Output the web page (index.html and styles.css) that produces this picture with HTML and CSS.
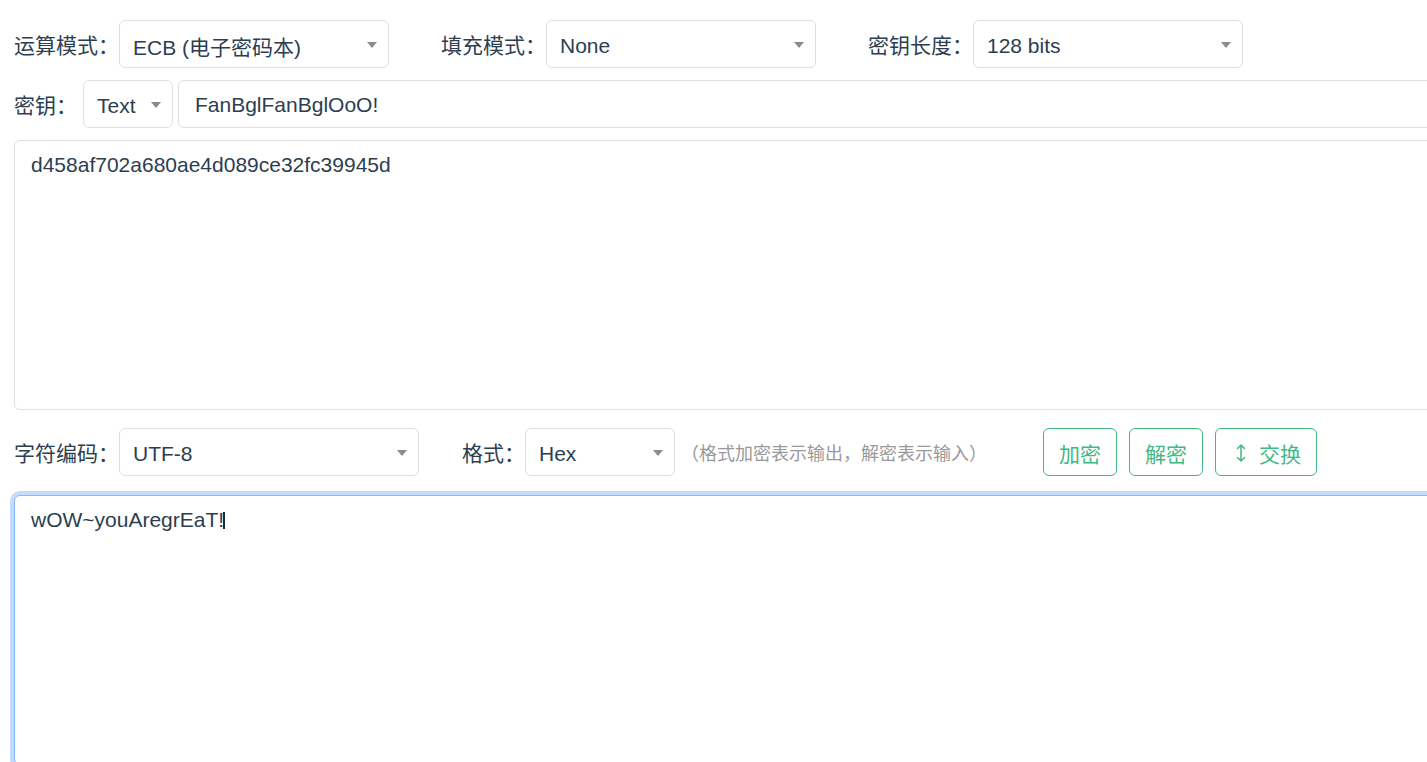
FILE: index.html
```html
<!DOCTYPE html>
<html lang="zh-CN">
<head>
  <meta charset="UTF-8">
  <meta name="viewport" content="width=device-width, initial-scale=1.0">
  <title>AES 加解密</title>
  <link rel="stylesheet" href="styles.css">
</head>
<body>

<div class="page">

  <div class="row">
    <span class="label">运算模式：</span>
    <div class="select w270 gap-after"><span>ECB (电子密码本)</span><i class="caret"></i></div>
    <span class="label">填充模式：</span>
    <div class="select w270 gap-after"><span>None</span><i class="caret"></i></div>
    <span class="label">密钥长度：</span>
    <div class="select w270"><span>128 bits</span><i class="caret"></i></div>
  </div>

  <div class="row">
    <span class="label key-label">密钥：</span>
    <div class="select w90"><span>Text</span><i class="caret"></i></div>
    <div class="input key-input">FanBglFanBglOoO!</div>
  </div>

  <div class="textbox">d458af702a680ae4d089ce32fc39945d</div>

  <div class="row row-tools">
    <span class="label">字符编码：</span>
    <div class="select w300 gap-small"><span>UTF-8</span><i class="caret"></i></div>
    <span class="label">格式：</span>
    <div class="select w150"><span>Hex</span><i class="caret"></i></div>
    <span class="hint">（格式加密表示输出，解密表示输入）</span>
    <div class="buttons">
      <button class="btn">加密</button>
      <button class="btn">解密</button>
      <button class="btn">
        <svg class="swap-icon" width="20" height="22" viewBox="0 0 20 22" fill="none" stroke="currentColor" stroke-width="1.5" stroke-linecap="round" stroke-linejoin="round">
          <path d="M10 3v16M6.5 6.5L10 3l3.5 3.5M6.5 15.5L10 19l3.5-3.5"/>
        </svg>交换
      </button>
    </div>
  </div>

  <div class="textbox focused">wOW~youAregrEaT!<span class="cursor"></span></div>

</div>

</body>
</html>
```

FILE: styles.css
```css
html, body {
  margin: 0;
  padding: 0;
  overflow: hidden;
  background: #fff;
}

.page {
  width: 1600px;
  padding: 20px 0 0 14px;
  font-family: "Liberation Sans", Arial, "Noto Sans CJK SC", sans-serif;
  font-size: 21px;
  color: #2c3e50;
}

.row {
  display: flex;
  align-items: center;
  height: 48px;
  margin-bottom: 12px;
}

.row-tools {
  margin-top: 18px;
  margin-bottom: 19px;
}

.label {
  white-space: nowrap;
  color: #2c3e50;
}

.key-label {
  margin-right: 6px;
}

.select {
  position: relative;
  display: flex;
  align-items: center;
  box-sizing: border-box;
  height: 48px;
  padding: 3px 30px 0 13px;
  border: 1px solid #dcdfe6;
  border-radius: 6px;
  background: #fff;
  white-space: nowrap;
}

.w270 { width: 270px; }
.w300 { width: 300px; }
.w150 { width: 150px; }
.w90 { width: 90px; }

.gap-after { margin-right: 52px; }
.gap-small { margin-right: 43px; }

.caret {
  position: absolute;
  right: 11px;
  top: 21px;
  width: 0;
  height: 0;
  border-left: 5px solid transparent;
  border-right: 5px solid transparent;
  border-top: 6px solid #8a8a8a;
}

.input {
  display: flex;
  align-items: center;
  box-sizing: border-box;
  height: 48px;
  padding: 2px 16px 0;
  border: 1px solid #dcdfe6;
  border-radius: 6px;
}

.key-input {
  flex: 1;
  margin-left: 5px;
}

.textbox {
  box-sizing: border-box;
  height: 270px;
  padding: 8px 16px;
  line-height: 1.5;
  border: 1px solid #dcdfe6;
  border-radius: 6px;
  background: #fff;
  white-space: pre-wrap;
}

.textbox.focused {
  border-color: #80bdff;
  box-shadow: 0 0 0 4px #c3dcfd;
}

.cursor {
  display: inline-block;
  width: 1.5px;
  height: 17px;
  margin-left: -1px;
  vertical-align: -2px;
  background: #1f2d3d;
}

.hint {
  margin-left: 6px;
  font-size: 18px;
  color: #999;
  white-space: nowrap;
}

.buttons {
  display: flex;
  gap: 12px;
  margin-left: 56px;
}

.btn {
  display: flex;
  align-items: center;
  height: 48px;
  padding: 1px 15px 0;
  border: 1px solid #42b983;
  border-radius: 6px;
  background: #fff;
  color: #42b983;
  font-family: "Liberation Sans", Arial, "Noto Sans CJK SC", sans-serif;
  font-size: 21px;
  cursor: pointer;
}

.swap-icon {
  margin-right: 8px;
}
```
